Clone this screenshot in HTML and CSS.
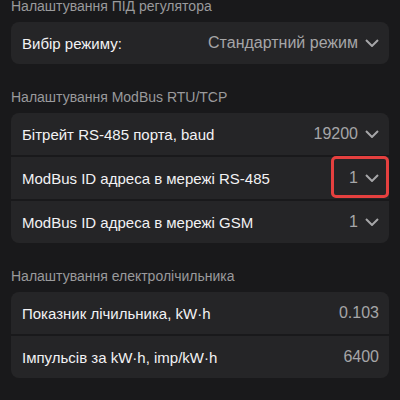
FILE: index.html
```html
<!DOCTYPE html>
<html lang="uk">
<head>
<meta charset="utf-8">
<link rel="stylesheet" href="styles.css">
</head>
<body>
<div class="page">
  <section class="section first">
    <div class="title">Налаштування ПІД регулятора</div>
    <div class="card">
      <div class="row">
        <span class="label">Вибір режиму:</span>
        <span class="value">Стандартний режим <svg class="chev" width="14" height="8" viewBox="0 0 14 8"><path d="M1 1l6 6 6-6" fill="none" stroke="currentColor" stroke-width="2"/></svg></span>
      </div>
    </div>
  </section>
  <section class="section">
    <div class="title">Налаштування ModBus RTU/TCP</div>
    <div class="card">
      <div class="row">
        <span class="label">Бітрейт RS-485 порта, baud</span>
        <span class="value">19200 <svg class="chev" width="14" height="8" viewBox="0 0 14 8"><path d="M1 1l6 6 6-6" fill="none" stroke="currentColor" stroke-width="2"/></svg></span>
      </div>
      <div class="row">
        <span class="label">ModBus ID адреса в мережі RS-485</span>
        <span class="value">1 <svg class="chev" width="14" height="8" viewBox="0 0 14 8"><path d="M1 1l6 6 6-6" fill="none" stroke="currentColor" stroke-width="2"/></svg></span>
        <span class="highlight"></span>
      </div>
      <div class="row">
        <span class="label">ModBus ID адреса в мережі GSM</span>
        <span class="value">1 <svg class="chev" width="14" height="8" viewBox="0 0 14 8"><path d="M1 1l6 6 6-6" fill="none" stroke="currentColor" stroke-width="2"/></svg></span>
      </div>
    </div>
  </section>
  <section class="section">
    <div class="title">Налаштування електролічильника</div>
    <div class="card">
      <div class="row">
        <span class="label">Показник лічильника, kW·h</span>
        <span class="value">0.103</span>
      </div>
      <div class="row">
        <span class="label">Імпульсів за kW·h, imp/kW·h</span>
        <span class="value">6400</span>
      </div>
    </div>
  </section>
</div>
</body>
</html>
```
FILE: styles.css
```css
html, body {
  margin: 0;
  padding: 0;
  background: #19191b;
  height: 100%;
  overflow: hidden;
}
body {
  font-family: "Liberation Sans", Arial, sans-serif;
}
.page {
  padding: 0 11px;
  margin-top: -3px;
}
.section {
  margin-top: 24px;
}
.section.first {
  margin-top: 0;
}
.title {
  color: #9a9a9c;
  font-size: 14px;
  line-height: 18px;
  margin-bottom: 7px;
}
.card {
  background: #252527;
  border-radius: 8px;
  display: flex;
  flex-direction: column;
  gap: 2px;
  overflow: hidden;
}
.row {
  position: relative;
  display: flex;
  align-items: center;
  justify-content: space-between;
  height: 42px;
  padding: 0 10px 0 11px;
  box-shadow: 0 2px 0 #19191b;
}
.row:last-child {
  box-shadow: none;
}
.label {
  color: #f2f2f4;
  font-size: 15px;
}
.value {
  color: #a6a6a8;
  font-size: 16px;
  display: flex;
  align-items: center;
  gap: 7px;
}
.chev {
  color: #a6a6a8;
  display: block;
}
.highlight {
  position: absolute;
  right: 0;
  top: -1px;
  width: 58px;
  height: 42px;
  box-sizing: border-box;
  border: 3px solid #e5403f;
  border-radius: 5px;
}
```
